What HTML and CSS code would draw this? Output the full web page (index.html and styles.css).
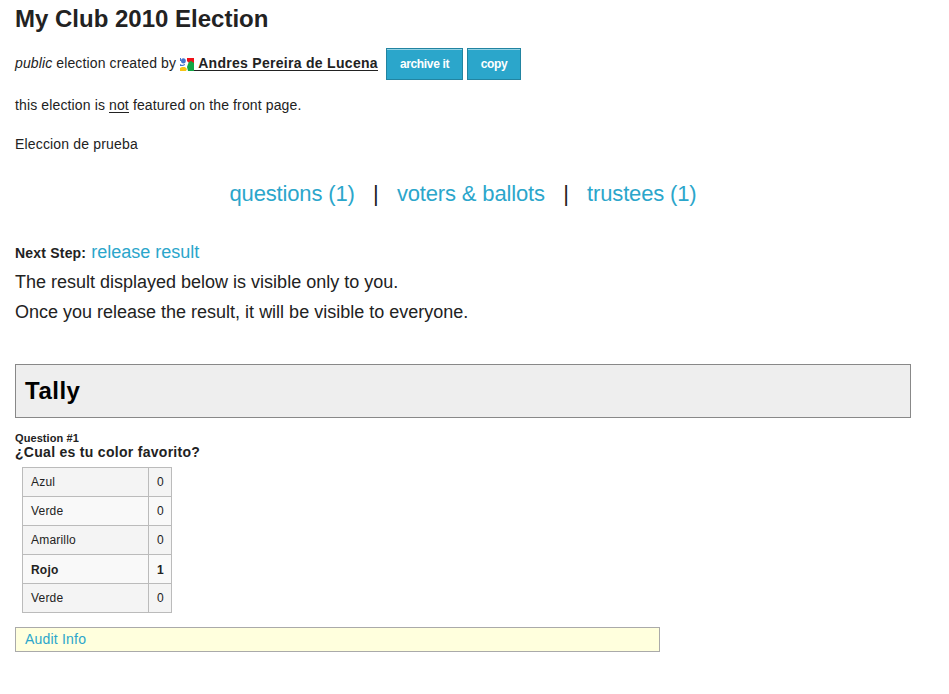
FILE: index.html
```
<!DOCTYPE html>
<html lang="en">
<head>
<meta charset="utf-8">
<title>My Club 2010 Election</title>
<link rel="stylesheet" href="styles.css">
</head>
<body>
<h1 class="title">My Club 2010 Election</h1>
<div class="byline">
  <span class="by"><em>public</em> election created by</span>
  <a class="owner" href="#"><svg class="logo" viewBox="0 0 14 14"><path fill="#f01018" d="M7 0h7v5H9L7 3z"/><path fill="#12a644" d="M9 4l2-1 3 2v8H8l-1-4 1-3z"/><path fill="#f6c414" d="M0 10l2-1h3l2 2-1 2H0z"/><ellipse cx="3.4" cy="2.8" rx="2.4" ry="2.6" fill="#4674cc"/><path fill="#4674cc" d="M0 0h1v3H0zM0 6l2 1 3-1v1L3 8H0z"/></svg><b class="name">&nbsp;Andres Pereira de Lucena</b></a>
  <a class="button archive" href="#">archive it</a>
  <a class="button copy" href="#">copy</a>
</div>
<p class="featured">this election is <span class="not">not</span> featured on the front page.</p>
<p class="description">Eleccion de prueba</p>
<nav class="links"><a href="#">questions (1)</a><span>|</span><a href="#">voters &amp; ballots</a><span>|</span><a href="#">trustees (1)</a></nav>
<section class="next">
  <p><b>Next Step:</b> <a href="#">release result</a></p>
  <p>The result displayed below is visible only to you.</p>
  <p>Once you release the result, it will be visible to everyone.</p>
</section>
<h2 class="tally">Tally</h2>
<h3 class="question"><small>Question #1</small>¿Cual es tu color favorito?</h3>
<table class="results">
  <tr><td>Azul</td><td>0</td></tr>
  <tr><td>Verde</td><td>0</td></tr>
  <tr><td>Amarillo</td><td>0</td></tr>
  <tr class="winner"><td>Rojo</td><td>1</td></tr>
  <tr><td>Verde</td><td>0</td></tr>
</table>
<div class="audit"><a href="#">Audit Info</a></div>
</body>
</html>
```
FILE: styles.css
```
* { box-sizing: border-box; }
body { margin: 0; padding: 5px 38px 0 15px; background: #fff; color: #222; font: 14px/20px "Liberation Sans", Arial, sans-serif; }
h1, h2, h3, p { margin: 0; }
a { color: #2ba6cb; text-decoration: none; }
.title { font-size: 24px; line-height: 28px; }
.byline { display: flex; align-items: center; height: 32px; margin-top: 15px; }
.by { width: 165px; padding-bottom: 2px; letter-spacing: .12px; white-space: nowrap; }
.owner { display: flex; width: 198px; height: 17px; margin-bottom: 2px; color: #222; white-space: nowrap; }
.logo { flex: none; width: 14px; height: 14px; margin-top: 3px; }
.name { flex: 1; height: 16px; border-bottom: 1px solid #222; line-height: 16px; letter-spacing: .29px; }
.button { height: 32px; border: 1px solid #2284a1; background: #2ba6cb; box-shadow: inset 0 1px 0 rgba(255, 255, 255, .5); color: #fff; font-size: 12px; font-weight: bold; line-height: 30px; letter-spacing: -.35px; text-align: center; }
.archive { width: 77px; margin-left: 8px; }
.copy { width: 54px; margin-left: 4px; }
.featured { margin-top: 15px; letter-spacing: .13px; }
.not { display: inline-block; height: 18px; border-bottom: 1px solid #222; line-height: 20px; vertical-align: top; }
.description { margin-top: 19px; letter-spacing: .17px; }
.links { display: flex; justify-content: center; margin-top: 25px; font-size: 22px; line-height: 30px; letter-spacing: -.15px; }
.links span { margin: 0 18.3px; color: #222; }
.next { margin-top: 28px; font-size: 18px; line-height: 30px; }
.next b { font-size: 14px; line-height: 1; letter-spacing: .2px; }
.tally { height: 54px; margin-top: 37px; padding-left: 9px; border: 1px solid #888; background: #eee; color: #000; font-size: 24px; line-height: 52px; letter-spacing: .5px; }
.question { margin-top: 14px; font-size: 14px; line-height: 14px; letter-spacing: .29px; }
.question small { display: block; font-size: 11px; line-height: 13px; letter-spacing: .08px; }
.results { width: 150px; margin: 8px 0 0 7px; border-collapse: collapse; font-size: 12px; line-height: 16px; letter-spacing: .2px; table-layout: fixed; }
.results td { height: 29px; padding: 0 0 0 8px; border: 1px solid #bbb; background: #f4f4f4; }
.results tr:nth-child(even) td { background: #f9f9f9; }
.results td:first-child { width: 126px; }
.results .winner td { padding-top: 1px; font-weight: bold; }
.audit { width: 645px; height: 25px; margin-top: 14px; padding-left: 9px; border: 1px solid #aaa; background: #ffffdd; line-height: 22px; letter-spacing: .2px; }
```
